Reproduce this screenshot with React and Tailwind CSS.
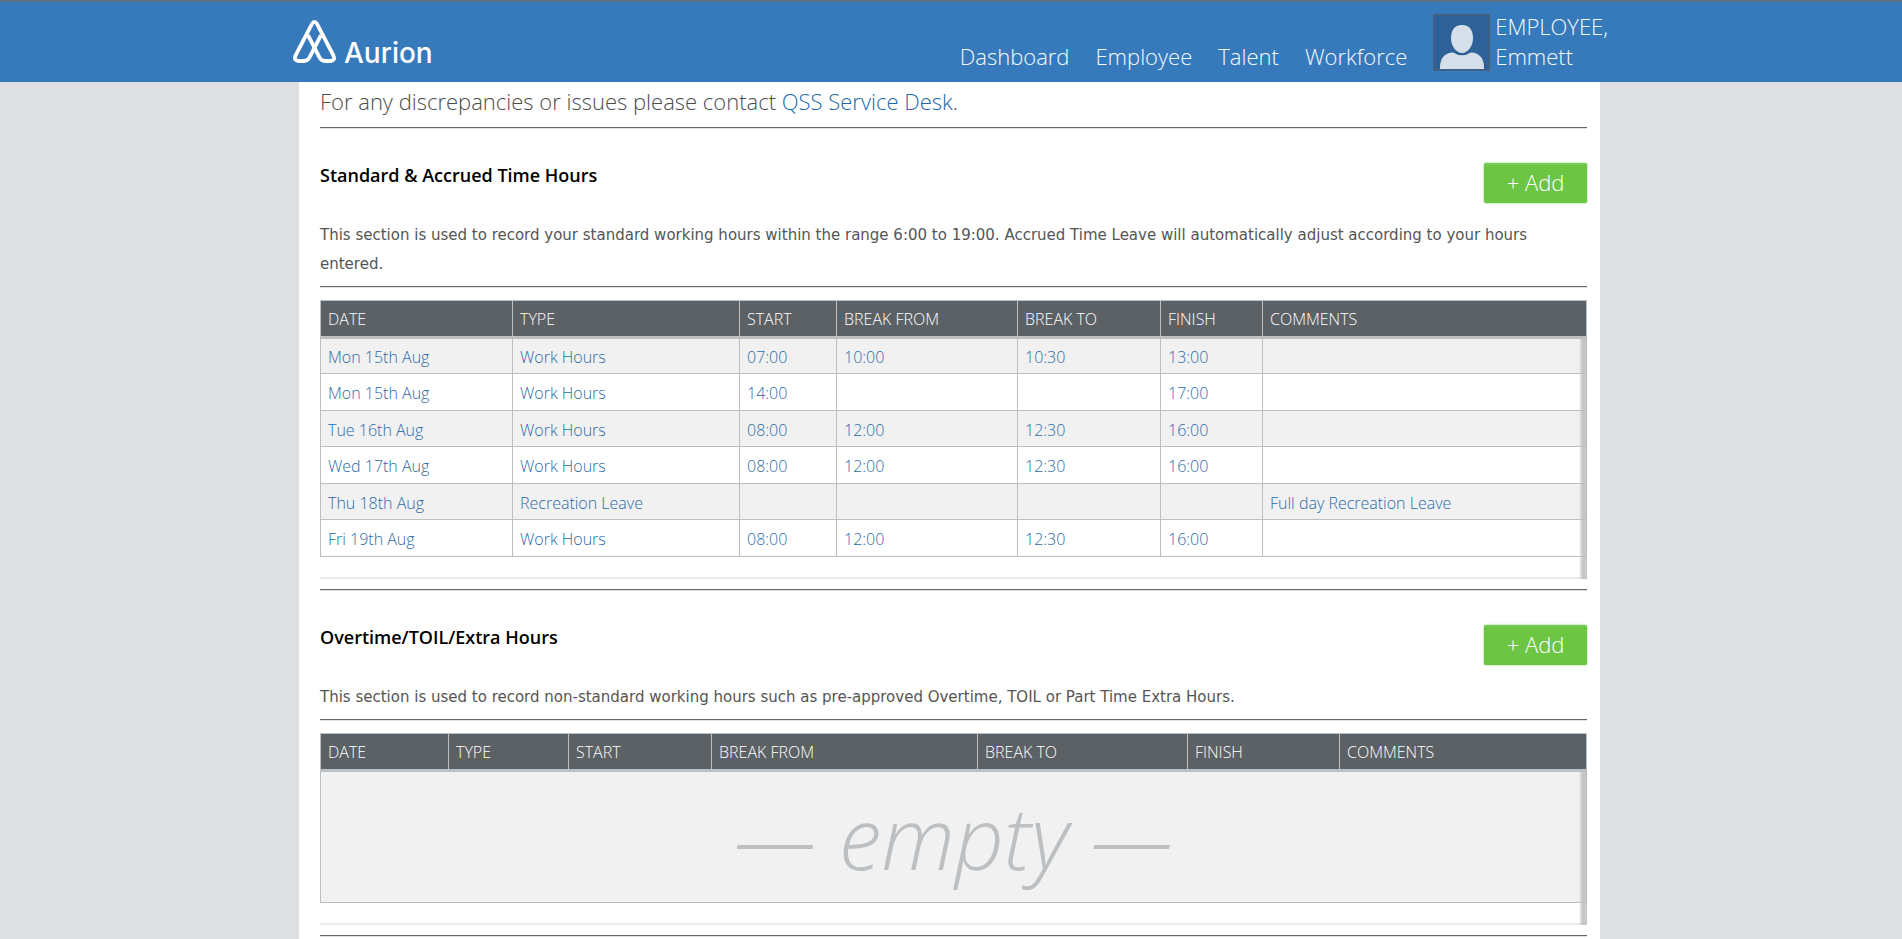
const navItems = ["Dashboard", "Employee", "Talent", "Workforce"];

const columns = ["DATE", "TYPE", "START", "BREAK FROM", "BREAK TO", "FINISH", "COMMENTS"];

const standardRows = [
  ["Mon 15th Aug", "Work Hours", "07:00", "10:00", "10:30", "13:00", ""],
  ["Mon 15th Aug", "Work Hours", "14:00", "", "", "17:00", ""],
  ["Tue 16th Aug", "Work Hours", "08:00", "12:00", "12:30", "16:00", ""],
  ["Wed 17th Aug", "Work Hours", "08:00", "12:00", "12:30", "16:00", ""],
  ["Thu 18th Aug", "Recreation Leave", "", "", "", "", "Full day Recreation Leave"],
  ["Fri 19th Aug", "Work Hours", "08:00", "12:00", "12:30", "16:00", ""],
];

const standardWidths = ["w-[192px]", "w-[227px]", "w-[97px]", "w-[181px]", "w-[143px]", "w-[102px]", ""];
const overtimeWidths = ["w-[128px]", "w-[120px]", "w-[143px]", "w-[266px]", "w-[210px]", "w-[152px]", ""];

function Logo() {
  return (
    <a href="#home" className="flex items-baseline gap-2 text-white">
      <svg className="h-[43px] w-[43px]" viewBox="0 0 43 43" fill="none" stroke="currentColor" strokeWidth="3.8" strokeLinejoin="round" aria-hidden="true">
        <path d="M19 3.8 Q21.5 0 24 3.8 L40.4 35.4 Q42.6 40.6 37.6 41 H32 Q28.6 41 26.6 37.6 L15 15.2" />
        <path d="M19 3.8 L2.6 35.4 Q0.4 40.6 5.4 41 H11 Q14.4 41 16.4 37.6 L28 15.2" />
      </svg>
      <span className="font-['Inter',sans-serif] text-[28px] leading-[30px] font-medium">Aurion</span>
    </a>
  );
}

function Avatar() {
  return (
    <svg className="h-[57px] w-[57px] shrink-0" viewBox="0 0 57 57" aria-hidden="true">
      <rect x="1" y="1" width="55" height="55" fill="#2d6197" stroke="#40617f" strokeWidth="2" />
      <path d="M29 11 C37 11 40 17 40 24 C40 32 35 39 29 39 C23 39 18 32 18 24 C18 17 21 11 29 11 Z" fill="#d5dfea" />
      <path d="M7 55 V52 Q8 39 20 38.5 Q29 44 38 38.5 Q50 39 51 52 V55 Z" fill="#d5dfea" />
    </svg>
  );
}

function Header() {
  return (
    <header className="border-t-2 border-[#5b7486] bg-[#377abb] pr-[3px]">
      <div className="mx-auto flex h-20 max-w-[1301px] justify-between">
        <div className="-ml-1.5 pt-[18px]">
          <Logo />
        </div>
        <div className="-mr-2 flex items-end gap-[26px] pb-[9px] text-[22px] leading-[30px] font-light text-[#f4faff]">
          <nav className="flex gap-[26px] pb-0.5">
            {navItems.map((item) => (
              <a key={item} href={"#" + item.toLowerCase()}>{item}</a>
            ))}
          </nav>
          <a href="#profile" className="flex items-center gap-[5px]">
            <Avatar />
            <span className="pb-0.5">EMPLOYEE,<br />Emmett</span>
          </a>
        </div>
      </div>
    </header>
  );
}

function Rule() {
  return <hr className="h-0.5 border-t border-b border-t-[#66686a] border-b-[#e0e0e0]" />;
}

function HoursTable({ label, widths, rows }) {
  return (
    <div className="relative border-b-2 border-[#ebebeb] pb-5">
      <table aria-label={label} className="w-full table-fixed border-collapse border border-[#bcbfc1] text-left text-[16px] leading-5 font-light">
        <colgroup>
          {columns.map((c, i) => <col key={c} className={widths[i]} />)}
        </colgroup>
        <thead>
          <tr className="h-[37px] border-b-[3px] border-[#bcc0c3] bg-[#5c6165] text-white">
            {columns.map((c) => (
              <th key={c} scope="col" className="border-x border-[#bcbfc1] px-[7px] font-light">{c}</th>
            ))}
          </tr>
        </thead>
        <tbody>
          {rows.length === 0 && (
            <tr className="h-[132px] bg-[#f1f1f1]">
              <td colSpan={7} className="text-center align-middle text-[86px] leading-[120px] italic text-[#bcc0c3]">— empty —</td>
            </tr>
          )}
          {rows.map((row, i) => (
            <tr key={i} className="border-b border-[#bcbfc1] odd:h-9 odd:bg-[#f1f1f1] even:h-[37px]">
              {row.map((cell, j) => (
                <td key={j} className="border-x border-[#bcbfc1] px-[7px] pt-0.5">
                  {cell && <a href={"#entry-" + i} className="text-[#2c6ba8]">{cell}</a>}
                </td>
              ))}
            </tr>
          ))}
        </tbody>
      </table>
      <div className="absolute top-[39px] right-0 -bottom-0.5 w-2 bg-linear-to-r from-transparent to-[#bbbbbb]/80 to-40%" />
    </div>
  );
}

function Section({ title, description, widths, rows }) {
  return (
    <section>
      <div className="flex items-start justify-between pt-[34px]">
        <h2 className="text-[18px] leading-6 font-semibold text-black">{title}</h2>
        <button type="button" className="h-10 w-[103px] rounded-xs border-t-2 border-[#74c957] bg-[#6cc644] pb-1 text-[22px] leading-[34px] font-light text-white shadow-[0_0_2px_#6cc644]">+ Add</button>
      </div>
      <p className="pt-[18px] pb-[7px] font-['DejaVu_Sans',Verdana,sans-serif] text-[15px] leading-[29px] text-[#555555]">{description}</p>
      <Rule />
      <div className="pt-3 pb-2.5">
        <HoursTable label={title} widths={widths} rows={rows} />
      </div>
      <Rule />
    </section>
  );
}

export default function App() {
  return (
    <div className="h-screen overflow-hidden bg-[#dedfe1] font-['Open_Sans',sans-serif]">
      <Header />
      <div className="h-full pr-[3px]">
        <main className="mx-auto h-full max-w-[1301px] bg-white pr-[13px] pl-[21px]">
          <p className="pt-[3px] pb-2.5 text-[22px] leading-8 font-light text-[#4c4c4c]">
            For any discrepancies or issues please contact <a href="#service-desk" className="text-[#2068aa]">QSS Service Desk</a>.
          </p>
          <Rule />
          <Section
            title="Standard & Accrued Time Hours"
            description="This section is used to record your standard working hours within the range 6:00 to 19:00. Accrued Time Leave will automatically adjust according to your hours entered."
            widths={standardWidths}
            rows={standardRows}
          />
          <Section
            title="Overtime/TOIL/Extra Hours"
            description="This section is used to record non-standard working hours such as pre-approved Overtime, TOIL or Part Time Extra Hours."
            widths={overtimeWidths}
            rows={[]}
          />
        </main>
      </div>
    </div>
  );
}
